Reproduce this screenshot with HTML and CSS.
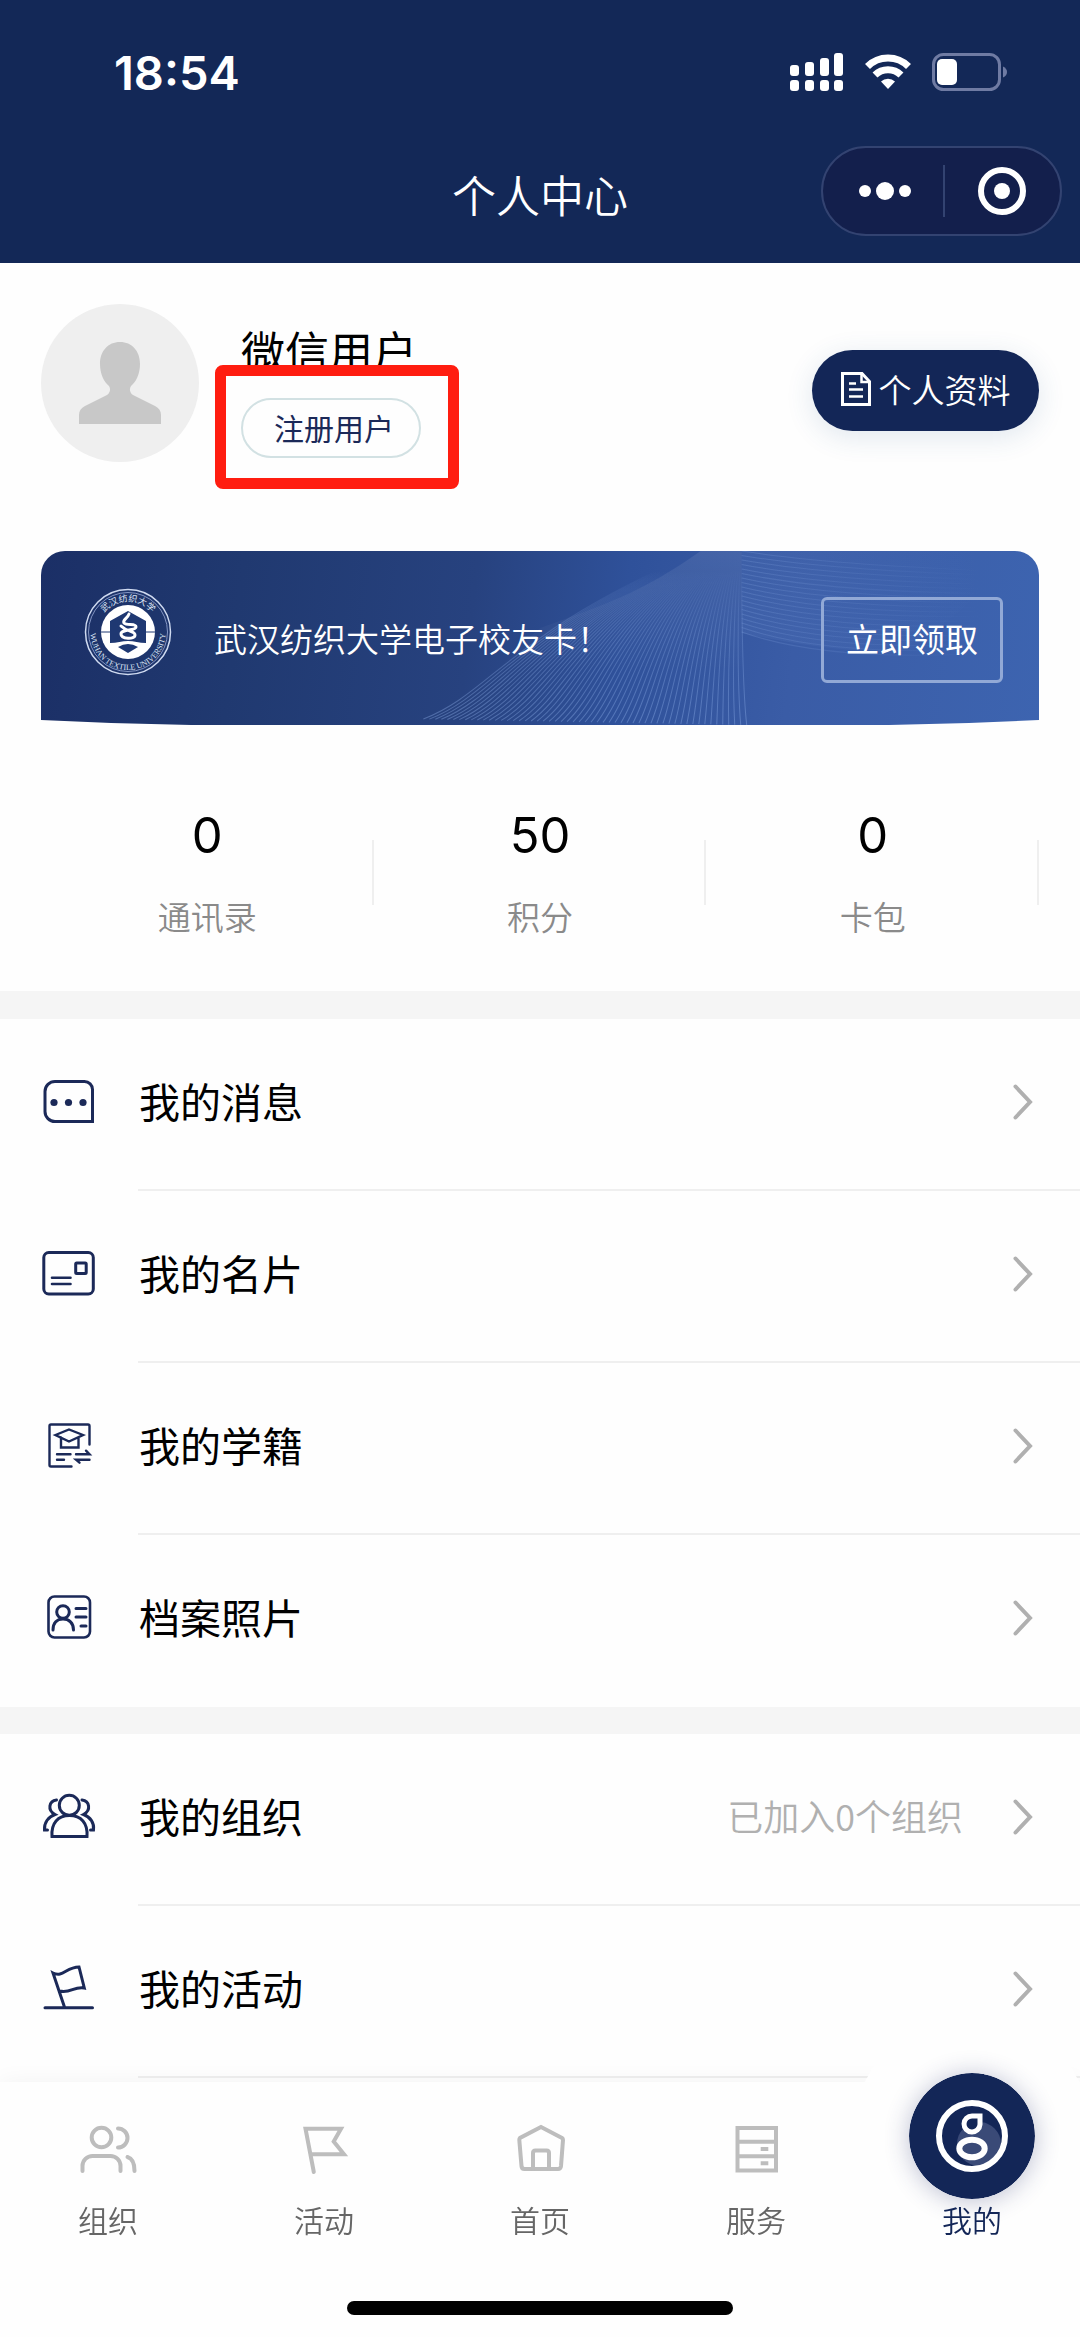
FILE: index.html
```html
<!DOCTYPE html>
<html lang="zh-CN">
<head>
  <meta charset="UTF-8">
  <meta name="viewport" content="width=device-width, initial-scale=1.0">
  <title>个人中心</title>
  <link rel="stylesheet" href="styles.css">
</head>
<body>
  <header class="header">
    <div class="status-bar">
      <span class="time">18:54</span>
      <div class="status-icons">
        <svg width="54" height="38" viewBox="0 0 54 38" fill="#fff">
          <rect x="0" y="12" width="9" height="11" rx="3"/>
          <rect x="15" y="9" width="9" height="14" rx="3"/>
          <rect x="30" y="5" width="9" height="18" rx="3"/>
          <rect x="44" y="0" width="9" height="23" rx="3"/>
          <rect x="0" y="27" width="9" height="11" rx="3"/>
          <rect x="15" y="27" width="9" height="11" rx="3"/>
          <rect x="30" y="27" width="9" height="11" rx="3"/>
          <rect x="44" y="27" width="9" height="11" rx="3"/>
        </svg>
        <svg width="46" height="36" viewBox="0 0 46 36" fill="none" stroke="#fff" stroke-width="7">
          <path d="M2.500 12.500A29 29 0 0 1 43.500 12.500"/>
          <path d="M10 21A18.500 18.500 0 0 1 36 21"/>
          <path d="M23 35L16 27.500A10 10 0 0 1 30 27.500Z" fill="#fff" stroke="none"/>
        </svg>
        <svg width="76" height="38" viewBox="0 0 76 38">
          <rect x="1.500" y="1.500" width="66" height="35" rx="10" fill="none" stroke="#6f7ba3" stroke-width="3"/>
          <rect x="5" y="6" width="20" height="26" rx="5" fill="#fff"/>
          <path d="M71 13.500q4 2 4 5.500t-4 5.500z" fill="#6f7ba3"/>
        </svg>
      </div>
    </div>
    <div class="nav-bar">
      <h1>个人中心</h1>
      <div class="capsule">
        <button type="button" aria-label="更多">
          <svg width="56" height="20" viewBox="0 0 56 20" fill="#fff">
            <circle cx="8" cy="10" r="6"/>
            <circle cx="28" cy="10" r="9"/>
            <circle cx="48" cy="10" r="6"/>
          </svg>
        </button>
        <button type="button" aria-label="关闭">
          <svg width="50" height="50" viewBox="0 0 50 50">
            <circle cx="25" cy="25" r="21" fill="none" stroke="#fff" stroke-width="6"/>
            <circle cx="25" cy="25" r="8" fill="#fff"/>
          </svg>
        </button>
      </div>
    </div>
  </header>

  <main>
    <section class="profile">
      <svg class="avatar" viewBox="0 0 158 158">
        <circle cx="79" cy="79" r="79" fill="#efefef"/>
        <path d="M79 38c12 0 20 9 20 22 0 10-4 18-9 22-2 3-1 7 2 9l22 11c4 2 6 5 6 9v9H38v-9c0-4 2-7 6-9l22-11c3-2 4-6 2-9-5-4-9-12-9-22 0-13 8-22 20-22z" fill="#c8c8c8"/>
      </svg>
      <div class="user-info">
        <div class="user-name">微信用户</div>
        <div class="user-tag">注册用户<span class="highlight"></span></div>
      </div>
      <button type="button" class="profile-btn">
        <svg width="30" height="34" viewBox="0 0 30 34" fill="none" stroke="#fff" stroke-width="3">
          <path d="M1.500 1.500H21L28.500 9.500V32.500H1.500Z"/>
          <path d="M20.500 1.500V10H28.500" stroke-width="2.500"/>
          <path d="M8 11.500H15M8 17.500H22M8 24.500H22" stroke-width="2.500"/>
        </svg>
        个人资料
      </button>
    </section>

    <section class="card">
      <svg class="card-bg" viewBox="0 0 997 174" preserveAspectRatio="none">
        <defs>
          <linearGradient id="fade" gradientUnits="userSpaceOnUse" x1="700" y1="0" x2="940" y2="0">
            <stop offset="0" stop-color="#8fb0ea" stop-opacity=".22"/>
            <stop offset="1" stop-color="#8fb0ea" stop-opacity="0"/>
          </linearGradient>
          <linearGradient id="rise" gradientUnits="userSpaceOnUse" x1="0" y1="174" x2="0" y2="20">
            <stop offset="0" stop-color="#8fb0ea" stop-opacity=".4"/>
            <stop offset=".6" stop-color="#8fb0ea" stop-opacity=".25"/>
            <stop offset="1" stop-color="#8fb0ea" stop-opacity="0"/>
          </linearGradient>
          <linearGradient id="shade" gradientUnits="userSpaceOnUse" x1="0" y1="0" x2="0" y2="120">
            <stop offset="0" stop-color="#fff" stop-opacity=".08"/>
            <stop offset="1" stop-color="#fff" stop-opacity="0"/>
          </linearGradient>
        </defs>
        <path d="M659 0C600 42 560 55 499 77C460 110 450 135 382 170V174H705Q700 120 700 0Z" fill="url(#shade)"/>
        <path d="M700 0H960Q940 60 850 102Q770 98 700 82Z" fill="url(#fade)" opacity=".4"/>
        <g id="waves" fill="none"></g>
      </svg>
      <svg class="logo" viewBox="0 0 88 88">
        <defs>
          <path id="arcTop" d="M13.500 44A30.500 30.500 0 0 1 74.500 44"/>
          <path id="arcBottom" d="M8 34A37.500 37.500 0 1 0 80 34"/>
        </defs>
        <circle cx="44" cy="44" r="42.500" fill="none" stroke="#cfdaf0" stroke-width="1.500"/>
        <circle cx="44" cy="44" r="39.500" fill="none" stroke="#8496c4" stroke-width="1"/>
        <circle cx="44" cy="44" r="27" fill="#fff"/>
        <path d="M16 44H72" stroke="#1f3872" stroke-width="1"/>
        <path d="M44 23L62 33V55C55 55 50 53 44 53S33 55 26 55V33Z" fill="#1f3872"/>
        <path d="M34 59Q44 53 54 59L44 65Z" fill="#1f3872"/>
        <path d="M45 26C44 30 38 32 40 35C43 38 52 35 52 39C52 43 37 41 37 46C37 51 51 52 51 47C51 43 43 44 37 38" fill="none" stroke="#fff" stroke-width="3" stroke-linecap="round"/>
        <text class="logo-cn"><textPath href="#arcTop" startOffset="50%">武汉纺织大学</textPath></text>
        <text class="logo-en"><textPath href="#arcBottom" startOffset="50%">WUHAN TEXTILE UNIVERSITY</textPath></text>
      </svg>
      <p>武汉纺织大学电子校友卡！</p>
      <button type="button">立即领取</button>
    </section>

    <section class="stats">
      <div class="stat"><strong>0</strong><span>通讯录</span></div>
      <div class="stat"><strong>50</strong><span>积分</span></div>
      <div class="stat"><strong>0</strong><span>卡包</span></div>
    </section>

    <nav class="menu">
      <a href="#message">
        <svg class="icon" viewBox="0 0 56 56">
          <path d="M51.500 47.500H14a10 10 0 0 1-10-10V17.500a10 10 0 0 1 10-10H43.500a8 8 0 0 1 8 8Z"/>
          <g fill="#1b2958" stroke="none"><circle cx="13" cy="28.500" r="3.600"/><circle cx="27.500" cy="28.500" r="3.600"/><circle cx="42" cy="28.500" r="3.600"/></g>
        </svg>
        <span class="label">我的消息</span>
        <svg class="arrow" viewBox="0 0 20 36"><path d="M2.500 2.500L17 18L2.500 33.500"/></svg>
      </a>
      <a href="#namecard">
        <svg class="icon" viewBox="0 0 56 56">
          <rect x="2.800" y="6.500" width="49.500" height="41.500" rx="5"/>
          <rect x="34.700" y="17" width="10.500" height="10.500" rx="1"/>
          <path d="M11 31.700H29.500M11 38H29.500" stroke-width="2.600"/>
        </svg>
        <span class="label">我的名片</span>
        <svg class="arrow" viewBox="0 0 20 36"><path d="M2.500 2.500L17 18L2.500 33.500"/></svg>
      </a>
      <a href="#school">
        <svg class="icon thin" viewBox="0 0 56 56">
          <path d="M48.500 26.500V8Q48.500 6.500 47 6.500H10Q8.500 6.500 8.500 8V47Q8.500 48.500 10 48.500H30.500"/>
          <path d="M14.500 17L28 11.500L42 17L28 23.500ZM20 19.500V29.500H37.500V19.500"/>
          <path d="M16 36.300H29.500M16 41.700H23M35 36.300H48.500L45 32.700M48.500 41.700H35L38.500 44.700"/>
        </svg>
        <span class="label">我的学籍</span>
        <svg class="arrow" viewBox="0 0 20 36"><path d="M2.500 2.500L17 18L2.500 33.500"/></svg>
      </a>
      <a href="#photo">
        <svg class="icon" viewBox="0 0 56 56">
          <rect x="7.500" y="6.500" width="41.500" height="41" rx="6" stroke-width="2.600"/>
          <circle cx="22" cy="22" r="6.300"/>
          <path d="M12 40C12 33 16 29 22 29S32.500 33 32.500 40M35 18.500H45M35 27H45M40 36H45"/>
        </svg>
        <span class="label">档案照片</span>
        <svg class="arrow" viewBox="0 0 20 36"><path d="M2.500 2.500L17 18L2.500 33.500"/></svg>
      </a>
    </nav>

    <nav class="menu">
      <a href="#organization">
        <svg class="icon" viewBox="0 0 56 56">
          <circle cx="28.300" cy="16.300" r="10"/>
          <path d="M11 47.500C10 34 17 26.500 28.500 26.500S47 34 46 47.500Z"/>
          <path d="M15.500 11C8 12 6 21 14 25.500C7 28 3 34 3.500 41H6.500"/>
          <path d="M41 11C48.500 12 50.500 21 42.500 25.500C49.500 28 53.500 34 52.500 41H49.500"/>
        </svg>
        <span class="label">我的组织</span>
        <span class="value">已加入0个组织</span>
        <svg class="arrow" viewBox="0 0 20 36"><path d="M2.500 2.500L17 18L2.500 33.500"/></svg>
      </a>
      <a href="#activity">
        <svg class="icon" viewBox="0 0 56 56">
          <path d="M4 46.700H51.500M23.700 46.700L12 12C22 17 25 6 38 6L43.300 27C33 25 29 33 18.500 30"/>
        </svg>
        <span class="label">我的活动</span>
        <svg class="arrow" viewBox="0 0 20 36"><path d="M2.500 2.500L17 18L2.500 33.500"/></svg>
      </a>
    </nav>
  </main>

  <footer class="tab-bar">
    <nav class="tabs">
      <a href="#org">
        <svg class="tab-icon" viewBox="0 0 60 60">
          <circle cx="23.500" cy="17.500" r="9.800"/>
          <path d="M40 8.500a9.500 9.500 0 0 1 0 19M4.500 51V46a10 10 0 0 1 10-10H32.500a10 10 0 0 1 10 10V51M49.500 37Q56.500 39 56.500 51"/>
        </svg>
        <span>组织</span>
      </a>
      <a href="#act">
        <svg class="tab-icon" viewBox="0 0 60 60">
          <path d="M19.800 52L11.500 8.700H47L39.700 21.500L50 34.300H16.500"/>
        </svg>
        <span>活动</span>
      </a>
      <a href="#home">
        <svg class="tab-icon" viewBox="0 0 60 60">
          <path d="M31 7L52 18Q53 18.700 53 20L51 46Q50.700 49 48 49H14.500Q11.700 49 11.500 46L9.300 20Q9.300 18.700 10 18Z"/>
          <path d="M23 49V33Q23 30.500 25.500 30.500H36.500Q39 30.500 39 33V49"/>
        </svg>
        <span>首页</span>
      </a>
      <a href="#service">
        <svg class="tab-icon square" viewBox="0 0 60 60">
          <path d="M11.500 8H50V50.500H11.500ZM11.500 21.700H50M11.500 36.300H50M34.700 29H42.300M34.700 43.300H42.300"/>
        </svg>
        <span>服务</span>
      </a>
      <a href="#mine" class="active">
        <svg class="mine-icon" viewBox="0 0 126 126" fill="none" stroke="#fff">
          <circle cx="63" cy="63" r="63" fill="#132657" stroke="none"/>
          <circle cx="70" cy="71" r="22" fill="#3a4a77" stroke="none"/>
          <circle cx="63" cy="63" r="33" stroke-width="6"/>
          <path d="M71 43V51.500A8 8 0 1 1 63 43Z" stroke-width="5" fill="#132657"/>
          <ellipse cx="63" cy="75.500" rx="12.700" ry="8.800" stroke-width="6"/>
        </svg>
        <span>我的</span>
      </a>
    </nav>
    <div class="home-indicator"></div>
  </footer>

  <script>
    // fan of thin lines behind the card text
    const waves = document.getElementById("waves");

    function addWave(d, color) {
      const path = document.createElementNS("http://www.w3.org/2000/svg", "path");
      path.setAttribute("d", d);
      path.setAttribute("stroke", color);
      waves.appendChild(path);
    }

    for (let i = 0; i <= 54; i++) {
      const t = i / 54;
      addWave(`M${382 + 323 * t} ${168 + 6 * t}C${450 + 250 * t} ${142 - 12 * t} ${470 + 230 * t} ${80 - 30 * t} ${659 + 41 * t} 0`, "url(#rise)");
    }

    for (let i = 0; i <= 18; i++) {
      addWave(`M700 ${i * 4.5}Q790 ${14 + i * 5.5} 960 ${20 + i * 4.5}`, "url(#fade)");
    }
  </script>
</body>
</html>
```

FILE: styles.css
```css
* {
  box-sizing: border-box;
}

body {
  margin: 0;
  padding-bottom: 255px;
  font-family: "Noto Sans CJK SC", sans-serif;
  background: #fefefe;
  color: #000;
}

a {
  color: inherit;
  text-decoration: none;
}

button {
  font-family: inherit;
  color: #fff;
  cursor: pointer;
}

svg {
  display: block;
  flex-shrink: 0;
}

/* Header */
.header {
  background: #132857;
  color: #fff;
  padding-bottom: 27px;
}

.status-bar {
  display: flex;
  justify-content: space-between;
  align-items: center;
  height: 146px;
  padding: 0 72px 2px 114px;
}

.time {
  font-family: Inter, sans-serif;
  font-size: 47px;
  font-weight: 600;
}

.status-icons {
  display: flex;
  align-items: center;
  gap: 21px;
}

.nav-bar {
  display: grid;
  grid-template-columns: 1fr auto 1fr;
  align-items: center;
  padding: 0 18px;
}

.nav-bar h1 {
  grid-column: 2;
  margin: 0;
  padding-top: 6px;
  font-size: 44px;
  font-weight: 350;
  line-height: 60px;
}

.capsule {
  justify-self: end;
  display: flex;
  align-items: center;
  width: 241px;
  height: 90px;
  padding-left: 4px;
  border: 2px solid #334371;
  border-radius: 45px;
  background: #131f4c;
}

.capsule button {
  flex: 1;
  display: flex;
  align-items: center;
  justify-content: center;
  height: 52px;
  padding: 0;
  border: none;
  background: none;
}

.capsule button + button {
  border-left: 2px solid #334371;
}

/* User profile */
.profile {
  display: flex;
  align-items: center;
  padding: 41px 41px 89px;
}

.avatar {
  width: 158px;
  height: 158px;
}

.user-info {
  flex: 1;
  margin: 12px 0 0 42px;
}

.user-name {
  margin-bottom: 19px;
  font-size: 44px;
  line-height: 58px;
}

.user-tag {
  position: relative;
  width: 180px;
  height: 60px;
  padding-left: 6px;
  border: 2px solid #d2e1e3;
  border-radius: 30px;
  color: #1b2958;
  font-size: 30px;
  line-height: 54px;
  text-align: center;
}

.highlight {
  position: absolute;
  top: -35px;
  right: -40px;
  bottom: -33px;
  left: -28px;
  border: 11px solid #ff1d10;
  border-radius: 8px;
}

.profile-btn {
  display: flex;
  align-items: center;
  justify-content: center;
  gap: 8px;
  width: 227px;
  height: 81px;
  margin-top: 14px;
  padding: 0 0 2px;
  border: none;
  border-radius: 41px;
  background: #132657;
  box-shadow: 0 6px 28px rgba(40, 90, 140, .14);
  font-size: 33px;
  font-weight: 350;
}

/* Alumni card */
.card {
  position: relative;
  display: flex;
  align-items: center;
  height: 174px;
  margin: 0 41px;
  padding: 0 36px 0 43px;
  overflow: hidden;
  border-radius: 24px 24px 0 0;
  background: linear-gradient(97deg, #1b2f66, #203970 20%, #27427f 43%, #2f519a 58%, #3a5ca6 75%, #3d64b0);
  color: #fff;
  /* slightly bowed bottom edge */
  clip-path: polygon(0 0, 100% 0, 100% calc(100% - 5px), calc(100% - 70px) calc(100% - 2px), calc(100% - 150px) 100%, 150px 100%, 70px calc(100% - 2px), 0 calc(100% - 5px));
}

.card-bg {
  position: absolute;
  top: 0;
  left: 0;
  width: 100%;
  height: 100%;
}

.logo {
  position: relative;
  width: 88px;
  height: 88px;
  margin-bottom: 12px;
}

.logo text {
  fill: #dfe7f7;
  text-anchor: middle;
}

.logo-cn {
  font-size: 9px;
}

.logo-en {
  font-family: "Liberation Serif", serif;
  font-size: 8px;
}

.card p {
  position: relative;
  flex: 1;
  margin: 0 0 0 42px;
  font-size: 33px;
  font-weight: 350;
}

.card button {
  position: relative;
  width: 182px;
  height: 86px;
  margin-top: 3px;
  padding: 0 0 4px;
  border: 3px solid #92a9d6;
  border-radius: 6px;
  background: none;
  font-size: 33px;
}

/* Stats */
.stats {
  display: grid;
  grid-template-columns: repeat(3, 1fr);
  padding: 81px 41px 39px;
  border-bottom: 28px solid #f5f5f5;
}

.stat {
  position: relative;
  display: flex;
  flex-direction: column;
  align-items: center;
  gap: 26px;
  height: 146px;
}

.stat::after {
  content: "";
  position: absolute;
  top: 34px;
  right: 0;
  width: 2px;
  height: 65px;
  background: #efefef;
}

.stat strong {
  font-family: Inter, sans-serif;
  font-size: 49px;
  font-weight: 400;
  line-height: 60px;
}

.stat span {
  color: #8a8a8a;
  font-size: 33px;
  font-weight: 350;
  line-height: 48px;
}

/* Menu lists */
.menu a {
  position: relative;
  display: flex;
  align-items: center;
  height: 172px;
  padding: 0 47px 6px 41px;
}

.menu a::after {
  content: "";
  position: absolute;
  right: 0;
  bottom: 0;
  left: 138px;
  height: 2px;
  background: #efefef;
}

.menu + .menu {
  border-top: 27px solid #f5f5f5;
}

.menu:not(:last-child) a:last-child::after {
  display: none;
}

.icon {
  width: 56px;
  height: 56px;
  margin-right: 42px;
  fill: none;
  stroke: #1b2958;
  stroke-width: 3px;
  stroke-linecap: round;
}

.icon.thin {
  stroke-width: 2.4px;
}

.label {
  flex: 1;
  padding-bottom: 4px;
  font-size: 41px;
}

.value {
  margin-right: 50px;
  padding-bottom: 4px;
  color: #b0b0b0;
  font-size: 36px;
  font-weight: 350;
}

.arrow {
  width: 20px;
  height: 36px;
  fill: none;
  stroke: #b0b0b0;
  stroke-width: 4px;
  stroke-linecap: round;
}

/* Bottom tabs */
.tab-bar {
  position: fixed;
  right: 0;
  bottom: 0;
  left: 0;
  height: 255px;
  background: #fefefe;
  box-shadow: 0 0 22px rgba(0, 0, 0, .05);
}

.tabs {
  display: grid;
  grid-template-columns: repeat(5, 1fr);
  height: 219px;
  padding-top: 38px;
}

.tabs a {
  position: relative;
  display: flex;
  flex-direction: column;
  align-items: center;
  gap: 17px;
  color: #666;
}

.tabs span {
  position: relative;
  font-size: 30px;
  font-weight: 350;
  line-height: 44px;
}

.tabs .active {
  justify-content: flex-start;
  padding-top: 77px;
  color: #132657;
}

.tab-icon {
  width: 60px;
  height: 60px;
  fill: none;
  stroke: #bdbdbd;
  stroke-width: 4px;
  stroke-linecap: round;
}

.tab-icon.square {
  stroke-linecap: butt;
}

/* raised button of the current tab */
.tabs .active::before {
  content: "";
  position: absolute;
  top: -104px;
  width: 240px;
  height: 240px;
  border-radius: 50%;
  background: #fefefe;
}

.mine-icon {
  position: absolute;
  top: -47px;
  width: 126px;
  height: 126px;
  border-radius: 50%;
  box-shadow: 0 2px 24px rgba(40, 50, 110, .3);
}

.home-indicator {
  width: 386px;
  height: 14px;
  margin: 0 auto;
  border-radius: 7px;
  background: #000;
}
```
